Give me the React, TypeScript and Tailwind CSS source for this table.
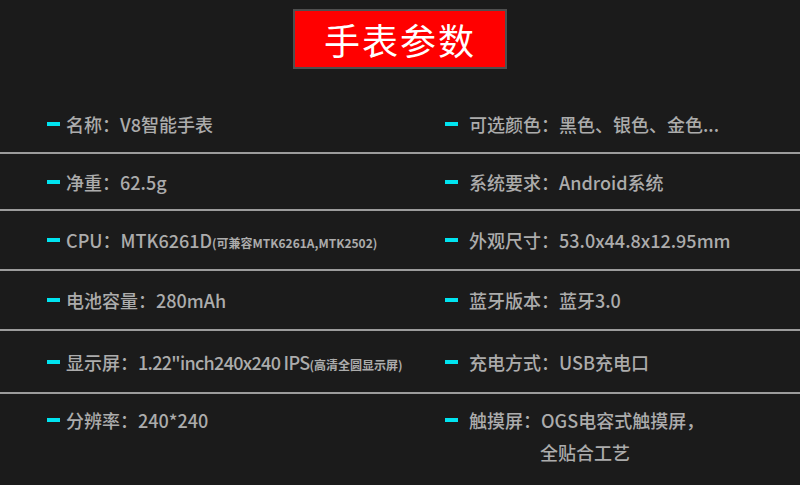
const font = { fontFamily: '"Noto Sans CJK SC", "Noto Sans", sans-serif' }

type Spec = { label: string; value: string; note?: string; tight?: boolean }

const rows: { h: string; left: Spec; right: Spec }[] = [
  {
    h: 'h-[58px]',
    left: { label: '名称', value: 'V8智能手表' },
    right: { label: '可选颜色', value: '黑色、银色、金色...' },
  },
  {
    h: 'h-[57px]',
    left: { label: '净重', value: '62.5g' },
    right: { label: '系统要求', value: 'Android系统' },
  },
  {
    h: 'h-[60px]',
    left: { label: 'CPU', value: 'MTK6261D', note: '(可兼容MTK6261A,MTK2502)' },
    right: { label: '外观尺寸', value: '53.0x44.8x12.95mm' },
  },
  {
    h: 'h-[60px]',
    left: { label: '电池容量', value: '280mAh' },
    right: { label: '蓝牙版本', value: '蓝牙3.0' },
  },
  {
    h: 'h-[63px]',
    left: { label: '显示屏', value: '1.22"inch240x240 IPS', note: '(高清全圆显示屏)', tight: true },
    right: { label: '充电方式', value: 'USB充电口' },
  },
]

function Dash() {
  return <span className="block w-[13px] h-[4px] bg-[#00e4f0] shrink-0" />
}

function Item({ spec, gap }: { spec: Spec; gap: string }) {
  return (
    <div className={`flex items-center ${gap}`}>
      <Dash />
      <span className="text-[18px] font-medium text-[#acacac] whitespace-nowrap leading-none">
        {spec.label}：
        <span className={spec.tight ? 'tracking-[-0.7px]' : ''}>{spec.value}</span>
        {spec.note && <span className="text-[12px] font-semibold">{spec.note}</span>}
      </span>
    </div>
  )
}

export default function App() {
  return (
    <div className="w-[800px] h-[485px] bg-[#1b1b1b] overflow-hidden" style={font}>
      <div className="pt-[9px] flex justify-center">
        <div className="w-[214px] h-[60px] bg-[#ff0000] border-2 border-[#4f4f4f] flex items-center justify-center">
          <span className="text-white text-[36px] tracking-[2px] leading-none">手表参数</span>
        </div>
      </div>

      <div className="mt-[27px]">
        {rows.map((r) => (
          <div key={r.left.label} className={`${r.h} flex items-center border-b-2 border-[#9c9c9c]`}>
            <div className="w-[445px] pl-[47px]">
              <Item spec={r.left} gap="gap-[6px]" />
            </div>
            <div>
              <Item spec={r.right} gap="gap-[11px]" />
            </div>
          </div>
        ))}

        {/* last row: no rule under it */}
        <div className="flex pt-[10px]">
          <div className="w-[445px] pl-[47px] h-[32px] flex items-center">
            <Item spec={{ label: '分辨率', value: '240*240' }} gap="gap-[6px]" />
          </div>
          <div>
            <div className="h-[32px] flex items-center">
              <Item spec={{ label: '触摸屏', value: 'OGS电容式触摸屏，' }} gap="gap-[11px]" />
            </div>
            <div className="h-[32px] flex items-center pl-[95px] text-[18px] font-medium text-[#acacac] leading-none">
              全贴合工艺
            </div>
          </div>
        </div>
      </div>
    </div>
  )
}
